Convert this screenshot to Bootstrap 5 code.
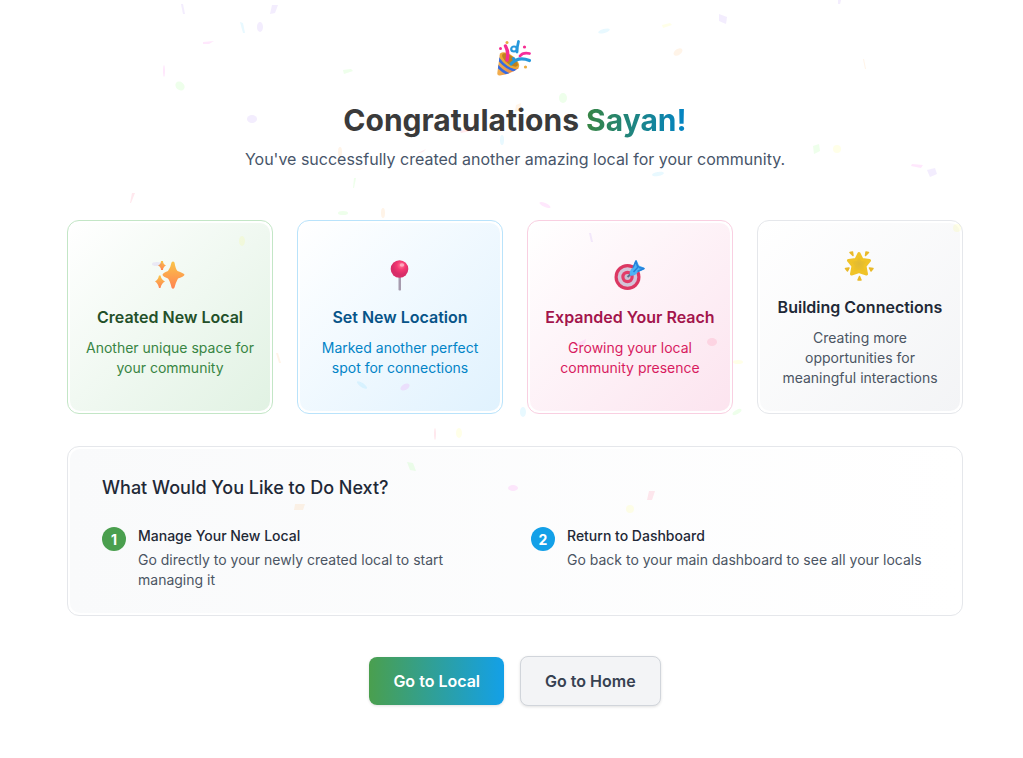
<!DOCTYPE html>
<html lang="en">
<head>
<meta charset="utf-8">
<meta name="viewport" content="width=device-width, initial-scale=1">
<title>Congratulations</title>
<link href="https://cdn.jsdelivr.net/npm/bootstrap@5.3.0/dist/css/bootstrap.min.css" rel="stylesheet">
<style>
body { font-family: Inter, "Liberation Sans", sans-serif; background: #fff; color: #1f2937; padding-left: 7px; }
.page-wrap { max-width: 896px; padding-top: 38px; padding-bottom: 48px; }
.party { width: 40px; height: 40px; }
h1 { font-size: 30px; line-height: 36px; font-weight: 700; color: #3a3a3a; }
.guest-name { background: linear-gradient(90deg, #388543, #0284c7); -webkit-background-clip: text; background-clip: text; color: transparent; }
.intro { font-size: 16px; line-height: 26px; color: #475569; }
.tile { border: 1px solid var(--edge); border-radius: 12px; padding: 2px; background: #fff; }
.tile-fill { border-radius: 10px; padding: 24px 12px 23px; background: linear-gradient(135deg, #fff, var(--tint)); }
.tile svg { width: 36px; height: 36px; margin-bottom: 12px; }
.tile-fill h2 { font-size: 16px; line-height: 24px; font-weight: 600; margin-bottom: 9px; color: var(--strong); }
.tile p, .step p, .step h3 { font-size: 14px; line-height: 20px; }
.tile p { color: var(--soft); }
.tile-green { --edge: #c3e6c6; --tint: #e1f2e3; --strong: #235029; --soft: #388543; }
.tile-blue { --edge: #b9e3fb; --tint: #e0f2fe; --strong: #075488; --soft: #0284c7; }
.tile-pink { --edge: #f9cfe1; --tint: #fce4ef; --strong: #a3154c; --soft: #d81b60; }
.tile-gray { --edge: #e5e7eb; --tint: #f3f4f6; --strong: #1f2937; --soft: #4b5563; }
.tile-next { --edge: #e5e7eb; margin-top: 32px; }
.next-fill { border-radius: 10px; padding: 25px 32px 23px; background: linear-gradient(90deg, #f9fafb, #fff); }
.next-fill h2 { font-size: 18px; line-height: 28px; font-weight: 500; color: #1f2937; }
.step-grid { --bs-gutter-x: 32px; }
.step h3 { font-weight: 500; color: #1f2937; }
.step p { color: #4b5563; }
.step-number { width: 24px; height: 24px; margin-top: 1px; font-size: 14px; font-weight: 700; color: #fff; }
.number-green { background: #4a9f4e; }
.number-blue { background: #13a0e8; }
.actions { padding-top: 40px; }
.actions .btn { font-size: 16px; line-height: 24px; font-weight: 600; padding: 12px 24px; border-radius: 8px; box-shadow: 0 1px 3px rgba(0,0,0,.12); }
.btn-local { border: 0; color: #fff; background: linear-gradient(90deg, #4a9f4e, #13a0e8); }
.btn-local:hover { color: #fff; }
.btn-home { border: 1px solid #d1d5db; color: #374151; background: #f3f4f6; }
.confetti { opacity: .09; pointer-events: none; }
</style>
</head>
<body>
<main class="page-wrap mx-auto">
  <header class="text-center mb-5">
    <svg class="party d-block mx-auto mb-4" viewBox="0 0 40 40" aria-hidden="true">
      <defs><linearGradient id="cone" x1="0" x2="1"><stop stop-color="#f2b04e"/><stop offset="1" stop-color="#e57a48"/></linearGradient><clipPath id="coneShape"><path d="M5 15 2.300 35Q2 38 5 37.500Q16 36 24 30Z"/></clipPath></defs>
      <path d="M5 15 2.300 35Q2 38 5 37.500Q16 36 24 30Z" fill="url(#cone)"/>
      <g clip-path="url(#coneShape)" fill="none" stroke="#376be2" stroke-width="2.800"><path d="M3 20Q9 29 21 33M1 26Q6 33 15 37"/></g>
      <ellipse cx="14.500" cy="22.500" rx="11.500" ry="5.500" transform="rotate(38 14.500 22.500)" fill="#eaa836"/>
      <ellipse cx="15" cy="22" rx="9.500" ry="4" transform="rotate(38 15 22)" fill="#bd811f"/>
      <path d="M12 22Q14 14 10.500 8" fill="none" stroke="#f52d91" stroke-width="3.400" stroke-linecap="round"/>
      <path d="M16 26Q23 18 34.500 22.500" fill="none" stroke="#2698dc" stroke-width="3.200" stroke-linecap="round"/>
      <path d="M25 18Q28 14 34.500 15.500" fill="none" stroke="#f52d9c" stroke-width="2.800" stroke-linecap="round"/>
      <path d="M23.500 3.500Q22 9 22 14" fill="none" stroke="#2698dc" stroke-width="2.800" stroke-linecap="round"/><ellipse cx="19" cy="11" rx="2.800" ry="2.500" fill="none" stroke="#2698dc" stroke-width="2.200"/>
      <g fill="#f52d91"><circle cx="5.500" cy="10.500" r="1.500"/><circle cx="29.500" cy="9" r="1.600"/></g>
      <g fill="#e9ad42"><circle cx="12" cy="4.500" r="1.500"/><circle cx="30.500" cy="29" r="1.600"/></g><circle cx="18.500" cy="20.500" r="1.600" fill="#2698dc"/>
    </svg>
    <h1 class="mb-2">Congratulations <span class="guest-name">Sayan!</span></h1>
    <p class="intro mb-0">You've successfully created another amazing local for your community.</p>
  </header>

  <section class="row row-cols-1 row-cols-sm-2 row-cols-lg-4 g-4" aria-label="Achievements">
    <div class="col"><article class="tile tile-green h-100"><div class="tile-fill h-100 d-flex flex-column align-items-center justify-content-center text-center">
      <svg viewBox="0 0 36 36" aria-hidden="true"><defs><linearGradient id="spark" x2="0" y2="1"><stop stop-color="#fac448"/><stop offset="1" stop-color="#ff8352"/></linearGradient></defs><g fill="url(#spark)"><path d="M19.500 5.500Q21 3.500 22.500 5.500Q23.500 12 25.500 14Q31.500 16 32.500 17.500Q32.500 19.500 26 21.500Q24 25 22.500 30.500Q21 33 19.500 30.500Q18 24 16 21.500Q11 19.500 10.500 18Q10.500 16 16 14Q18.500 11 19.500 5.500Z"/><path d="M9 4h2Q11 7 14 8.500Q11 10 11 13H9Q9 10 6 8.500Q9 7 9 4Z"/><path d="M7 18.500h1.500Q9.500 23 13 24.500Q9.500 26 8.500 31H7Q6 26 3 24.500Q6 23 7 18.500Z"/></g></svg>
      <h2>Created New Local</h2><p class="mb-0">Another unique space for your community</p>
    </div></article></div>
    <div class="col"><article class="tile tile-blue h-100"><div class="tile-fill h-100 d-flex flex-column align-items-center justify-content-center text-center">
      <svg viewBox="0 0 36 36" aria-hidden="true"><defs><radialGradient id="pinBall" cx=".6" cy=".3"><stop stop-color="#ff7999"/><stop offset=".5" stop-color="#f43872"/><stop offset="1" stop-color="#d82d68"/></radialGradient></defs><path d="M16.500 19h2.500v14q-1 1-2.500 0Z" fill="#a69bae"/><circle cx="17.500" cy="12" r="8.800" fill="url(#pinBall)"/><ellipse cx="20" cy="8" rx="2.300" ry="1.800" fill="#ffb8c9" opacity=".8"/></svg>
      <h2>Set New Location</h2><p class="mb-0">Marked another perfect spot for connections</p>
    </div></article></div>
    <div class="col"><article class="tile tile-pink h-100"><div class="tile-fill h-100 d-flex flex-column align-items-center justify-content-center text-center">
      <svg viewBox="0 0 36 36" aria-hidden="true"><circle cx="15.500" cy="20" r="13" fill="#dc3762"/><circle cx="15.500" cy="20" r="9.800" fill="#d3c4d8"/><circle cx="15.500" cy="20" r="6.200" fill="#e33b68"/><circle cx="15.500" cy="20" r="3" fill="#cbbfd1"/><path d="M15.500 20 20 16" stroke="#59718d" stroke-width="2"/><path d="M18 18.500Q16.500 14 21 10.500L23 4Q24 2.500 25 4L27 8.500L31.500 10.500Q33.500 11.500 32 12.500L26 15Q22 20 18 18.500Z" fill="#4db3f5"/><path d="M21.500 15 27 9M21 10.500 24 4l1.500 5.500M25.500 14.500 32 11.500 27 10.500" fill="none" stroke="#2581da" stroke-width="1.500" stroke-linejoin="round"/></svg>
      <h2>Expanded Your Reach</h2><p class="mb-0">Growing your local community presence</p>
    </div></article></div>
    <div class="col"><article class="tile tile-gray h-100"><div class="tile-fill h-100 d-flex flex-column align-items-center justify-content-center text-center">
      <svg viewBox="0 0 36 36" aria-hidden="true"><defs><radialGradient id="starGlow"><stop stop-color="#dfb936"/><stop offset="1" stop-color="#f4c51f"/></radialGradient></defs><path d="M17 6.500 20 12.500 27.500 13.500 23 19 24.500 27 17 24.500 9.500 27 11 19 6.500 13.500 14 12.500Z" fill="url(#starGlow)" stroke="#f0c328" stroke-width="3" stroke-linejoin="round"/><g fill="#e9b929" stroke="#e9b929" stroke-width="1.500" stroke-linejoin="round"><path d="M8 5.500 10.500 5 11 8.500ZM24 5l2.500.5L23.500 8.500ZM3.500 21.500l3.500-.5-1.500 3ZM27.500 21l3.500.5-2 2.500ZM17.500 29.500l1.500 3.500h-3Z"/></g></svg>
      <h2>Building Connections</h2><p class="mb-0">Creating more opportunities for meaningful interactions</p>
    </div></article></div>
  </section>

  <section class="tile tile-next">
    <div class="next-fill">
      <h2 class="mb-4">What Would You Like to Do Next?</h2>
      <div class="row row-cols-1 row-cols-md-2 step-grid">
        <div class="col step d-flex gap-2"><span class="step-number number-green rounded-circle d-flex align-items-center justify-content-center flex-shrink-0 me-1">1</span><div><h3 class="mb-1">Manage Your New Local</h3><p class="mb-0">Go directly to your newly created local to start managing it</p></div></div>
        <div class="col step d-flex gap-2"><span class="step-number number-blue rounded-circle d-flex align-items-center justify-content-center flex-shrink-0 me-1">2</span><div><h3 class="mb-1">Return to Dashboard</h3><p class="mb-0">Go back to your main dashboard to see all your locals</p></div></div>
      </div>
    </div>
  </section>

  <div class="actions d-flex flex-wrap justify-content-center align-items-center gap-3">
    <button type="button" class="btn btn-local">Go to Local</button>
    <button type="button" class="btn btn-home">Go to Home</button>
  </div>
</main>
<svg class="confetti position-fixed top-0 start-0 w-100 h-100" viewBox="0 0 1023 758" preserveAspectRatio="xMidYMin slice" aria-hidden="true">
  <g fill="#7c3aed"><path d="M181 4h2l2 10h-2ZM272 5h6l-3 8-5 1ZM719 14l8 3-1 7-7-3ZM838 0h3l-1 4h-2ZM927 170l8-2 2 6-7 3ZM589 233h2l2 9h-2Z"/><ellipse cx="260" cy="27" rx="3" ry="5"/><ellipse cx="252" cy="119" rx="5" ry="4"/><ellipse cx="157" cy="264" rx="5" ry="2"/></g>
  <g fill="#00b8ff"><path d="M240 22l3 1 2 10h-2Z"/><ellipse cx="604" cy="31" rx="6" ry="2" transform="rotate(-15 604 31)"/><ellipse cx="502" cy="140" rx="2" ry="5"/><ellipse cx="658" cy="174" rx="6" ry="2" transform="rotate(-10 658 174)"/><ellipse cx="523" cy="412" rx="3" ry="5"/><ellipse cx="362" cy="385" rx="6" ry="2" transform="rotate(35 362 385)"/></g>
  <g fill="#44ff22"><ellipse cx="180" cy="86" rx="5" ry="4" transform="rotate(40 180 86)"/><path d="M343 70l8-1 2 2-9 3ZM813 146l6-2 1 7-6 3ZM407 462l6 1 3 8-6-1ZM354 178h2l-2 10h-1Z"/><ellipse cx="563" cy="98" rx="4" ry="5"/><ellipse cx="343" cy="213" rx="5" ry="2"/><ellipse cx="737" cy="412" rx="5" ry="2" transform="rotate(-30 737 412)"/></g>
  <g fill="#ff00e6"><path d="M203 42l11-1-5 3h-6ZM912 164l11 1-2 3-10-2ZM578 343l8-4-1 5-8 2Z"/><ellipse cx="164" cy="71" rx="1" ry="6"/><ellipse cx="545" cy="205" rx="6" ry="2" transform="rotate(25 545 205)"/><ellipse cx="513" cy="488" rx="5" ry="3"/><ellipse cx="405" cy="387" rx="5" ry="3" transform="rotate(-30 405 387)"/></g>
  <g fill="#ff8800"><ellipse cx="678" cy="52" rx="5" ry="3" transform="rotate(-35 678 52)"/><path d="M863 59h1l2 10h-1ZM516 105l5-2-1 8-5 1ZM295 504h10l-2 6h-9ZM276 353h2l3 10h-2Z"/><ellipse cx="383" cy="213" rx="2" ry="5"/><ellipse cx="340" cy="152" rx="2" ry="5"/><path d="M353 170l11-2-5 2Z"/></g>
  <g fill="#ffff00"><path d="M662 25l8-2 2 2-9 3Z"/><circle cx="837" cy="149" r="4"/><ellipse cx="459" cy="433" rx="3" ry="5"/><ellipse cx="738" cy="362" rx="5" ry="2"/><circle cx="630" cy="509" r="4"/><ellipse cx="242" cy="241" rx="3" ry="5"/><ellipse cx="957" cy="228" rx="4" ry="4"/></g>
  <g fill="#ff0040"><path d="M649 491h6l-3 9h-5ZM132 193h3l-4 10h-1ZM416 154l10-5-3 3ZM460 131l10-3v3l-9 2Z"/><ellipse cx="435" cy="434" rx="1" ry="6"/><ellipse cx="712" cy="342" rx="5" ry="4"/></g>
</svg>
<script src="https://cdn.jsdelivr.net/npm/bootstrap@5.3.0/dist/js/bootstrap.bundle.min.js"></script>
</body>
</html>
